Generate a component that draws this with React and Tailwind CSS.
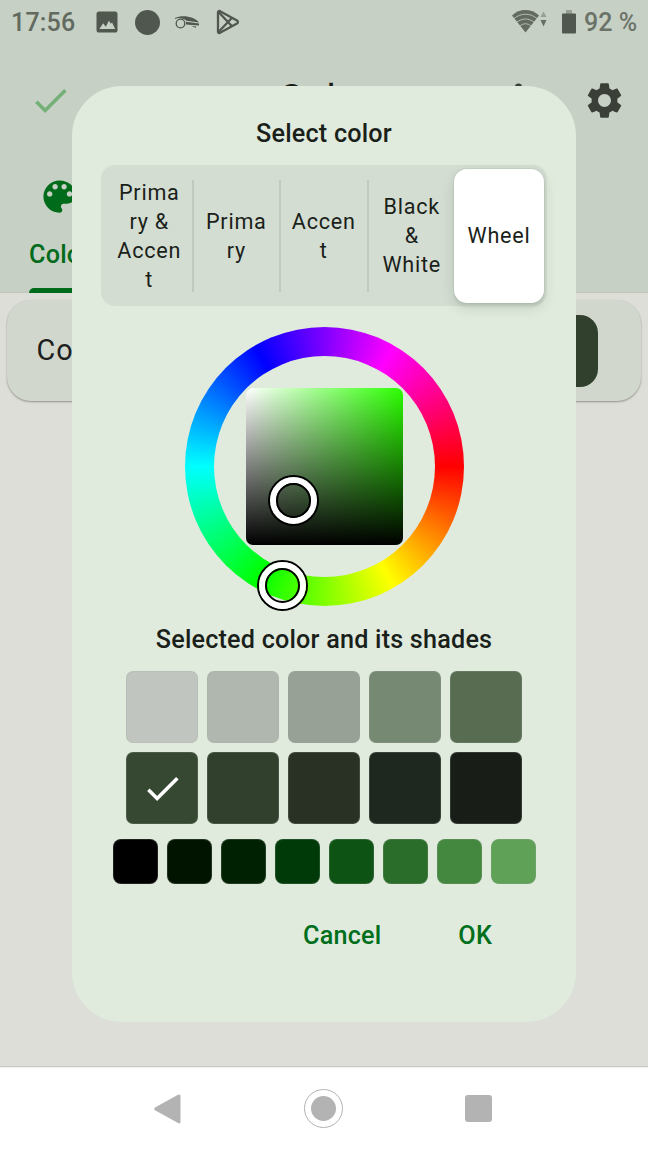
import React from "react";

const SHADES = [
  ["bg-[#c0c5bf]", "bg-[#b0b7af]", "bg-[#98a196]", "bg-[#768972]", "bg-[#576c51]"],
  ["bg-[#364832]", "bg-[#31402d]", "bg-[#283123]", "bg-[#1f281e]", "bg-[#181e17]"],
];
const TONES = [
  "bg-black", "bg-[#001400]", "bg-[#002202]", "bg-[#003a08]",
  "bg-[#0d5313]", "bg-[#2a6c2a]", "bg-[#44873f]", "bg-[#5ea157]",
];
const TABS = [
  ["Prima", "ry &", "Accen", "t"],
  ["Prima", "ry"],
  ["Accen", "t"],
  ["Black", "&", "White"],
];

const Check = ({ className }) => (
  <svg viewBox="0 0 24 24" fill="currentColor" className={className}>
    <path d="M9 16.17L4.83 12l-1.42 1.41L9 19 21 7l-1.41-1.41z" />
  </svg>
);

function StatusBar() {
  return (
    <div className="flex h-11 items-center pl-[11px] pr-[11px] text-[#50574f]">
      <span className="w-[64px] whitespace-nowrap pt-[2px] text-[25px] tracking-[0.2px] font-medium text-[#626a60]">17:56</span>
      <svg viewBox="0 0 24 24" fill="currentColor" className="ml-[18px] size-[28px]">
        <path d="M21 19V5c0-1.1-.9-2-2-2H5c-1.100 0-2 .9-2 2v14c0 1.100.9 2 2 2h14c1.100 0 2-.9 2-2zM5.500 18l3.200-5 2.300 3 2.600-5 1.700 2.500 1-1L19 18z" />
      </svg>
      <div className="ml-[13.500px] size-[25px] rounded-full bg-[#50574f]" />
      <svg viewBox="0 0 26 14" className="ml-[14px] h-[14px] w-[26px]">
        <path d="M.8 3C8-.5 20 1 25 7.500L12.500 5.800C9 2.800 4 2.500 1 4z" fill="currentColor" />
        <circle cx="6.500" cy="8.500" r="4.300" fill="none" stroke="currentColor" strokeWidth="1.300" />
        <path d="M12 6.800l13 1.700v2L12 9.500zM17 10.800l5 .7v1.500z" fill="currentColor" />
      </svg>
      <svg viewBox="0 0 24 26" className="ml-[16px] h-[26px] w-[24px]" fill="none" stroke="currentColor" strokeWidth="2.300" strokeLinejoin="round">
        <path d="M2 3.500Q2 1.500 4 2.200L21 11.500Q23 13 21 14.500L4 23.800Q2 24.500 2 22.500z" />
        <path d="M2.500 3L16 17.200M2.500 23L16 8.800" />
      </svg>
      <div className="flex-1" />
      <svg viewBox="0 0 36 26" className="h-[26px] w-[36px]">
        <path d="M0 6.500C8-.8 19-.8 27 6.500L13.500 23.500z" fill="#636b61" />
        <g fill="none" stroke="#c7d0c4" strokeWidth="0.8">
          <path d="M2 9.500C9 3.800 18 3.800 25 9.500M5 13C10.500 9 16.500 9 22 13M8 17C11.500 14 15.500 14 19 17" />
        </g>
        <path d="M28.500 8l3-5.500 3 5.500z" fill="#98a095" />
        <path d="M28.500 11h6l-3 6.500z" fill="#666e64" />
      </svg>
      <svg viewBox="0 0 14 24" className="mb-[1px] ml-[14px] h-[24px] w-[14px]">
        <path d="M4 0h6v4H4z" fill="#98a095" />
        <rect y="3.500" width="14" height="20" rx="1" fill="#50574f" />
      </svg>
      <span className="ml-[8px] w-[53px] whitespace-nowrap pt-[2px] text-[25px] font-medium text-[#6b7369]">92 %</span>
    </div>
  );
}

function Background() {
  return (
    <div className="flex h-full flex-col bg-[#ddded8]">
      <header className="flex h-[293px] shrink-0 flex-col bg-[#c7d0c4] shadow-[inset_0_-1px_1px_#bfc6bc]">
        <StatusBar />
        <div className="flex h-[113px] items-center pl-[29px] pr-[22px]">
          <Check className="size-[43px] text-[#74b077]" />
          <span className="mb-[3px] ml-[206px] text-[39.6px] leading-none text-[#1b1d1a]">Color</span>
          <div className="flex-1" />
          <svg viewBox="0 0 24 24" className="mr-[43px] size-[43px] text-[#3a4037]" fill="currentColor">
            <circle cx="12" cy="4.500" r="2" /><circle cx="12" cy="12" r="2" /><circle cx="12" cy="19" r="2" />
          </svg>
          <svg viewBox="0 0 24 24" className="size-[43px] text-[#3a4037]" fill="currentColor">
            <path d="M19.140 12.940c.04-.3.060-.61.060-.94 0-.32-.02-.64-.07-.94l2.030-1.580c.18-.14.230-.41.120-.61l-1.920-3.320c-.12-.22-.37-.29-.59-.22l-2.390.96c-.5-.38-1.030-.7-1.620-.94l-.36-2.540c-.04-.24-.24-.41-.48-.41h-3.840c-.24 0-.43.170-.47.410l-.36 2.540c-.59.240-1.130.570-1.620.940l-2.390-.96c-.22-.08-.47 0-.59.220L2.740 8.870c-.12.210-.08.470.120.610l2.030 1.580c-.05.300-.09.630-.09.940s.020.640.070.940l-2.030 1.580c-.18.140-.23.410-.12.610l1.920 3.320c.12.220.37.290.59.220l2.390-.96c.5.380 1.030.7 1.620.94l.36 2.540c.05.240.24.410.48.410h3.840c.24 0 .44-.17.470-.41l.36-2.540c.59-.24 1.130-.56 1.620-.94l2.390.96c.22.080.47 0 .59-.22l1.920-3.320c.12-.22.070-.47-.12-.61l-2.010-1.580zM12 15.600c-1.980 0-3.600-1.620-3.600-3.600s1.620-3.600 3.600-3.600 3.600 1.620 3.600 3.600-1.620 3.600-3.600 3.600z" />
          </svg>
        </div>
        <div className="flex w-[90px] flex-1 flex-col pl-[29px] text-[#006b1b]">
          <svg viewBox="0 0 24 24" fill="currentColor" className="ml-[8.600px] mt-[17.500px] size-[43.200px] shrink-0">
            <path d="M12 3c-4.970 0-9 4.030-9 9s4.030 9 9 9c.83 0 1.500-.67 1.500-1.500 0-.39-.15-.74-.39-1.010-.23-.26-.38-.61-.38-.99 0-.83.67-1.500 1.500-1.500H16c2.760 0 5-2.240 5-5 0-4.420-4.030-8-9-8zm-5.500 9c-.83 0-1.500-.67-1.500-1.500S5.670 9 6.500 9 8 9.670 8 10.500 7.330 12 6.500 12zm3-4C8.670 8 8 7.330 8 6.500S8.670 5 9.500 5s1.500.67 1.500 1.500S10.330 8 9.500 8zm5 0c-.83 0-1.500-.67-1.500-1.500S13.670 5 14.500 5s1.500.67 1.500 1.500S15.330 8 14.500 8zm3 4c-.83 0-1.500-.67-1.500-1.500S16.670 9 17.500 9s1.500.67 1.500 1.500-.67 1.500-1.500 1.500z" />
          </svg>
          <span className="mt-[19px] text-[25.2px] font-medium leading-[36px] tracking-[0.2px]">Color</span>
          <div className="mt-auto h-[5px] rounded-t-[5px] bg-[#006b1b]" />
        </div>
      </header>
      <div className="mx-[7px] mt-[7px] flex h-[101px] items-center justify-between rounded-[24px] bg-[#d1d7cd] pl-[29.500px] pr-[43.500px] shadow-[0_1px_2px_rgba(0,0,0,0.35)]">
        <span className="text-[28.8px] tracking-[0.9px] text-[#1d201c]">Color</span>
        <div className="h-[72px] w-[72px] rounded-[18px] bg-[#31402d]" />
      </div>
      <nav className="mt-auto flex h-[86px] shrink-0 items-center justify-between border-t border-[#c9cac6] bg-white pb-[2px] pl-[153.500px] pr-[156px] text-[#b3b3b3] shadow-[inset_0_1px_1px_#eeeeee]">
        <svg viewBox="0 0 27 30" className="h-[30px] w-[27px]" fill="currentColor">
          <path d="M1 13.500L24 .7Q26.500-.2 26.500 2V28Q26.500 30 24.500 29.200L1 16.300Q-.5 15 1 13.500z" />
        </svg>
        <div className="ml-[2px] flex size-[39px] items-center justify-center rounded-full border-[1.500px] border-[#b3b3b3]">
          <div className="size-[25px] rounded-full bg-[#b3b3b3]" />
        </div>
        <div className="size-[27px] rounded-[3px] bg-[#b3b3b3]" />
      </nav>
    </div>
  );
}

function Thumb({ className }) {
  return (
    <div className={"absolute size-[51px] rounded-full border-2 border-black " + className}>
      <div className="size-full rounded-full border-[6px] border-white">
        <div className="size-full rounded-full border-2 border-black" />
      </div>
    </div>
  );
}

function Wheel() {
  return (
    <div className="relative mt-[21px] flex size-[279px] items-center justify-center rounded-full bg-[conic-gradient(from_90deg,#f00,#ff0,#0f0,#0ff,#00f,#f0f,#f00)]">
      <div className="flex size-[221px] items-center justify-center rounded-full bg-[#e0ebde]">
        <div className="size-[157px] rounded-[7px] bg-[linear-gradient(to_top,#000,transparent),linear-gradient(to_right,#fff,#2bff00)]" />
      </div>
      <Thumb className="left-[83.500px] top-[148px]" />
      <Thumb className="left-[72.500px] top-[232.500px]" />
    </div>
  );
}

function Dialog() {
  return (
    <div className="flex h-[936px] w-[504px] flex-col items-center rounded-[50px] bg-[#e0ebde] text-[#1b1f1a]">
      <h1 className="mt-[30px] text-[25.2px] font-medium leading-[36px] tracking-[0.2px]">Select color</h1>
      <div className="mt-[13px] flex h-[141px] w-[446px] items-center rounded-[14px] bg-[#d3ddd2] p-[4px] text-center text-[21.600px] leading-[29px] tracking-[0.75px]">
        {TABS.map((lines, i) => (
          <div key={i} className={"flex h-[112px] shrink-0 flex-col items-center justify-center " + (i === 0 ? "w-[88.500px] pl-[2px] " : i === 3 ? "w-[86.500px] " : "w-[87.500px] ") + (i < 3 ? "border-r-2 border-[#c0cac0]" : "")}>
            {lines.map((l) => <span key={l}>{l}</span>)}
          </div>
        ))}
        <div className="-ml-[1px] flex h-[134px] w-[90px] shrink-0 items-center justify-center rounded-[13px] bg-white shadow-[0_5px_14px_rgba(0,30,0,0.12),0_5px_2px_rgba(0,30,0,0.04),0_0_0_1px_rgba(0,30,0,0.05)]">Wheel</div>
      </div>
      <Wheel />
      <h2 className="mt-[16px] text-[25.2px] font-medium leading-[36px] tracking-[0.2px]">Selected color and its shades</h2>
      <div className="mt-[13px] flex flex-col gap-[9px]">
        {SHADES.map((row, r) => (
          <div key={r} className="flex gap-[9px]">
            {row.map((c, i) => (
              <div key={c} className={"flex size-[72px] items-center justify-center rounded-[7px] border border-[#a0aaa0]/20 " + c}>
                {r === 1 && i === 0 && <Check className="size-[43px] text-white" />}
              </div>
            ))}
          </div>
        ))}
      </div>
      <div className="mt-[15px] flex gap-[9px]">
        {TONES.map((c) => <div key={c} className={"size-[45px] rounded-[8px] border border-[#a0aaa0]/20 " + c} />)}
      </div>
      <div className="mt-[34px] flex w-full items-center justify-end gap-[77px] pr-[84px] text-[25.2px] font-medium leading-[36px] tracking-[0.2px] text-[#006f1c]">
        <span>Cancel</span>
        <span>OK</span>
      </div>
    </div>
  );
}

export default function App() {
  return (
    <div className="relative h-[1152px] w-[648px] overflow-hidden font-[Roboto,sans-serif]">
      <Background />
      <div className="absolute left-[72px] top-[86px]">
        <Dialog />
      </div>
    </div>
  );
}
